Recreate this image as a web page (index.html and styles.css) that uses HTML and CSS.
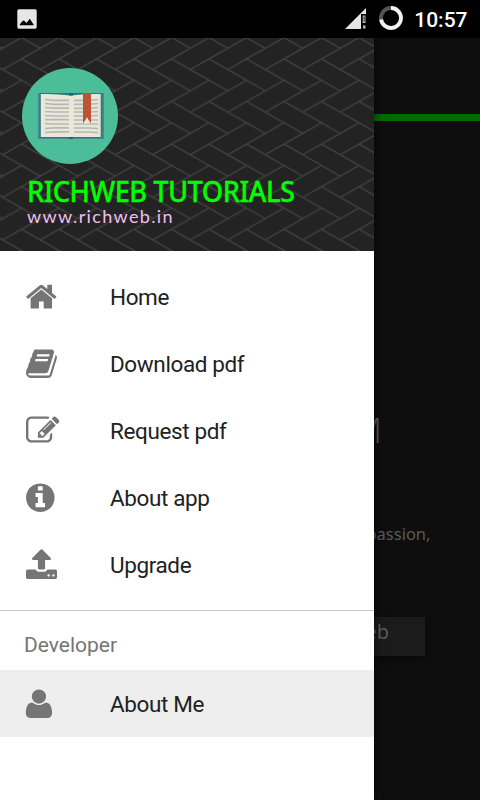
FILE: index.html
```html
<!DOCTYPE html>
<html lang="en">
<head>
<meta charset="utf-8">
<title>Richweb Tutorials</title>
<link rel="stylesheet" href="styles.css">
</head>
<body>
<div class="screen">
  <header class="status">
    <svg class="status-photo" viewBox="0 0 20 20"><rect x=".3" y=".3" width="19.400" height="19.400" rx="1.600" fill="#e6e6e6"/><path d="M2.500 16.300C4 13.500 6 11.500 7 11.500L9.500 14l3.300-4.300 4.200 6.600z" fill="#000"/></svg>
    <div class="status-right">
      <svg class="status-signal" viewBox="0 0 21 21"><path d="M0 21L21 0v6H16v15z" fill="#e6e6e6"/><path d="M17.700 7.500h2.800v7.500h-2.800zM18 17.500h2.500v3H18z" fill="#bbb"/><path d="M18.700 8.500h.9v5h-.9z" fill="#111"/></svg>
      <svg class="status-ring" viewBox="0 0 24 24"><circle cx="12" cy="12" r="10" fill="none" stroke="#555" stroke-width="3.800"/><path d="M12 2a10 10 0 1 1-9.900 11.400" fill="none" stroke="#f2f2f2" stroke-width="3.800"/></svg>
      <span class="clock">10:57</span>
    </div>
  </header>
  <div class="body">
    <main class="page">
      <div class="toolbar"></div>
      <div class="heading">M</div>
      <p class="tagline">passion,</p>
      <div class="button">Web</div>
    </main>
    <nav class="drawer">
      <div class="drawer-head">
        <svg class="pattern" width="374" height="213">
          <defs>
            <pattern id="weave" x="21.500" y="20.900" width="37.500" height="42.600" patternUnits="userSpaceOnUse">
              <g fill="none" stroke="#424242" stroke-width="1.400">
                <path d="M-18.750 10.650L37.500 -21.300M0 0L56.250 31.950"/>
                <path d="M18.750 10.650L75 -21.300M-37.500 0L18.750 31.950"/>
                <path d="M-18.750 53.250L37.500 21.300M18.750 53.250L75 21.300M-56.250 53.250L0 21.300"/>
              </g>
            </pattern>
          </defs>
          <rect width="374" height="213" fill="#232323"/>
          <rect width="374" height="213" fill="url(#weave)"/>
        </svg>
        <svg class="avatar" viewBox="0 0 96 96">
          <circle cx="48" cy="48" r="48" fill="#4bbd98"/>
          <rect x="16" y="25" width="66" height="46" fill="#448c90"/>
          <rect x="17.500" y="25" width="63" height="45" fill="#347383"/>
          <path d="M18.800 26Q34 25.500 48 27.500Q64 25.500 78.700 26V69H18.800z" fill="#e7e8d7"/>
          <path d="M78 27v42" stroke="#d5d0b5"/>
          <path d="M47 25h4v2.500h-4zM47 69h4v2h-4z" fill="#285f70"/>
          <path d="M23 31.500l9 .9h15M23 35.500l9 .9h15M23 39.500l9 .7h15M23 43.500l9 .5h15M23 47.500l9 .5h15M23 51.700h24M23 55.700l9 .3h15M23 60.500l9-.7h15M23 64.500l9-.7h15M52 32.400h15l9-.9M52 36.400h15l9-.9M52 40.300h15l9-.8M52 44h15l9-.5M52 48h15l9-.5M52 52h24M52 56h24M52 60h15l9 .6M52 64h15l9 .6" fill="none" stroke="#b7b8b5" stroke-width="1.700"/>
          <path d="M61 25h8v30.500l-4-6-4 6z" fill="#bd5335"/>
          <path d="M61.800 55.500l3.200-6 3.200 6z" fill="#e7e8d7"/>
        </svg>
        <div class="brand">RICHWEB TUTORIALS</div>
        <div class="site">www.richweb.in</div>
      </div>
      <ul class="menu">
        <li class="item"><svg class="icon" viewBox="74 0 1792 1792"><path d="M1472 992v480q0 26-19 45t-45 19h-384v-384h-256v384h-384q-26 0-45-19t-19-45v-480q0-1 .5-3t.5-3l575-474 575 474q1 2 1 6zm223-69l-62 74q-8 9-21 11h-3q-13 0-21-7l-692-577-692 577q-12 8-24 7-13-2-21-11l-62-74q-8-10-7-23.500t11-21.500l719-599q32-26 76-26t76 26l244 204v-195q0-14 9-23t23-9h192q14 0 23 9t9 23v408l219 182q10 8 11 21.500t-7 23.500z"/></svg><span class="label">Home</span></li>
        <li class="item"><svg class="icon" viewBox="64 0 1792 1792"><path d="M1703 478q40 57 18 129l-275 906q-19 64-76.500 107.500t-122.500 43.500h-923q-77 0-148.500-53.500t-99.500-131.500q-24-67-2-127 0-4 3-27t4-37q1-8-3-21.500t-3-19.500q2-11 8-21t16.500-23.500 16.500-23.500q23-38 45-91.500t30-91.500q3-10 .5-30t-.5-28q3-11 17-28t17-23q21-36 42-92t25-90q1-9-2.500-32t.5-28q4-13 22-30.500t22-22.500q19-26 42.500-84.500t27.500-96.500q1-8-3-25.500t-2-26.500q2-8 9-18t18-23 17-21q8-12 16.500-30.500t15-35 16-36 19.500-32 26.500-23.500 36-11.500 47.500 5.500l-1 3q38-9 51-9h761q74 0 114 56t18 130l-274 906q-36 119-71.500 153.500t-128.500 34.500h-869q-27 0-38 15-11 16-1 43 24 70 144 70h923q29 0 56-15.500t35-41.500l300-987q7-22 5-57 38 15 59 43zm-1064 2q-4 13 2 22.500t20 9.500h608q13 0 25.500-9.500t16.500-22.500l21-64q4-13-2-22.500t-20-9.500h-608q-13 0-25.500 9.500t-16.500 22.500zm-83 256q-4 13 2 22.500t20 9.500h608q13 0 25.500-9.500t16.500-22.500l21-64q4-13-2-22.500t-20-9.500h-608q-13 0-25.500 9.500t-16.500 22.500z"/></svg><span class="label">Download pdf</span></li>
        <li class="item"><svg class="icon" viewBox="0 0 1792 1792"><path d="M888 1184l116-116-152-152-116 116v56h96v96h56zm440-720q-16-16-33 1l-350 350q-17 17-1 33t33-1l350-350q17-17 1-33zm80 594v190q0 119-84.500 203.500t-203.500 84.500h-832q-119 0-203.500-84.500t-84.500-203.500v-832q0-119 84.500-203.500t203.500-84.500h832q63 0 117 25 15 7 18 23 3 17-9 29l-49 49q-14 14-32 8-23-6-45-6h-832q-66 0-113 47t-47 113v832q0 66 47 113t113 47h832q66 0 113-47t47-113v-126q0-13 9-22l64-64q15-15 35-7t20 29zm-96-738l288 288-672 672h-288v-288zm444 132l-92 92-288-288 92-92q28-28 68-28t68 28l152 152q28 28 28 68t-28 68z"/></svg><span class="label">Request pdf</span></li>
        <li class="item"><svg class="icon" viewBox="128 0 1792 1792"><path d="M1152 1376v-160q0-14-9-23t-23-9h-96v-512q0-14-9-23t-23-9h-320q-14 0-23 9t-9 23v160q0 14 9 23t23 9h96v320h-96q-14 0-23 9t-9 23v160q0 14 9 23t23 9h448q14 0 23-9t9-23zm-128-896v-160q0-14-9-23t-23-9h-192q-14 0-23 9t-9 23v160q0 14 9 23t23 9h192q14 0 23-9t9-23zm640 416q0 209-103 385.500t-279.500 279.500-385.500 103-385.500-103-279.500-279.500-103-385.500 103-385.500 279.500-279.500 385.500-103 385.500 103 279.500 279.500 103 385.500z"/></svg><span class="label">About app</span></li>
        <li class="item"><svg class="icon" viewBox="64 0 1792 1792"><path d="M1344 1472q0-26-19-45t-45-19-45 19-19 45 19 45 45 19 45-19 19-45zm256 0q0-26-19-45t-45-19-45 19-19 45 19 45 45 19 45-19 19-45zm128-224v320q0 40-28 68t-68 28h-1472q-40 0-68-28t-28-68v-320q0-40 28-68t68-28h427q21 56 70.500 92t110.500 36h256q61 0 110.500-36t70.500-92h427q40 0 68 28t28 68zm-325-648q-17 40-59 40h-256v448q0 26-19 45t-45 19h-256q-26 0-45-19t-19-45v-448h-256q-42 0-59-40-17-39 14-69l448-448q18-19 45-19t45 19l448 448q31 30 14 69z"/></svg><span class="label">Upgrade</span></li>
      </ul>
      <h2 class="group">Developer</h2>
      <ul class="menu-group">
        <li class="item item-selected"><svg class="icon" viewBox="202 0 1792 1792"><path d="M1600 1405q0 120-73 189.500t-194 69.500h-874q-121 0-194-69.500t-73-189.500q0-53 3.500-103.500t14-109 26.500-108.500 43-97.500 62-81 85.500-53.500 111.500-20q9 0 42 21.500t74.500 48 108 48 133.500 21.500 133.500-21.500 108-48 74.500-48 42-21.500q61 0 111.500 20t85.500 53.500 62 81 43 97.500 26.500 108.500 14 109 3.500 103.500zm-320-893q0 159-112.500 271.500t-271.500 112.500-271.500-112.500-112.500-271.500 112.500-271.500 271.500-112.500 271.500 112.500 112.500 271.500z"/></svg><span class="label">About Me</span></li>
      </ul>
    </nav>
  </div>
</div>
</body>
</html>
```
FILE: styles.css
```css
* { box-sizing: border-box; }
body { margin: 0; background: #0e0e0e; font-family: Roboto, sans-serif; }
ul { list-style: none; margin: 0; padding: 0; }
svg { display: block; }

.screen { width: 480px; height: 800px; overflow: hidden; display: flex; flex-direction: column; }

.status { height: 38px; flex: none; background: #000; display: flex; justify-content: space-between; align-items: flex-start; padding: 0 12.500px 0 17px; }
.status-photo { width: 20px; height: 20px; margin-top: 9px; }
.status-right { display: flex; align-items: flex-start; }
.status-signal { width: 21px; height: 21px; margin: 8px 13px 0 0; }
.status-ring { width: 24px; height: 24px; margin: 6px 11.500px 0 0; }
.clock { color: #fff; font-size: 21px; font-weight: 500; line-height: 38px; height: 38px; margin-top: 1px; }

.body { position: relative; flex: 1; }

.page { height: 762px; background: #0e0e0e; color: #5a5a5a; display: flex; flex-direction: column; align-items: flex-end; font-family: "Noto Sans", sans-serif; }
.toolbar { width: 480px; height: 83px; border-bottom: 7px solid #006b00; }
.heading { margin: 284px 98px 0 0; height: 50px; font: 300 35px/50px "Open Sans", sans-serif; }
.tagline { margin: 67px 49.500px 0 0; height: 24px; font-size: 16.500px; line-height: 24px; }
.button { width: 170px; height: 39px; margin: 71px 55px 0 0; padding-right: 36px; background: #1b1b1b; box-shadow: 0 2px 5px #080808; font-size: 20px; line-height: 30px; text-align: right; }

.drawer { position: absolute; left: 0; top: 0; width: 374px; height: 762px; background: #fff; box-shadow: 0 0 10px rgba(0, 0, 0, .6); }
.drawer-head { position: relative; height: 213px; padding: 30px 22px 0; }
.pattern { position: absolute; left: 0; top: 0; }
.avatar { position: relative; width: 96px; height: 96px; }
.brand { position: relative; margin: 12px 0 0 4.500px; height: 30px; font: 500 28.500px/30px "Noto Sans", sans-serif; color: #0f0; letter-spacing: -.600px; -webkit-text-stroke: .3px #0f0; white-space: nowrap; transform: scaleX(.96); transform-origin: 0 0; }
.site { position: relative; margin: 0 0 0 5px; height: 20px; font: 400 18px/20px Lato, sans-serif; color: #efbff0; letter-spacing: 1.350px; white-space: nowrap; }

.menu { padding: 12px 0; border-bottom: 1px solid #c8c8c8; }
.item { display: flex; align-items: center; height: 67px; padding-left: 26px; }
.item-selected { background: #eee; }
.icon { width: 33.400px; height: 33.400px; margin-right: 50.600px; fill: #757575; overflow: visible; }
.label { font-size: 22.500px; line-height: 26px; color: #212121; letter-spacing: -.380px; padding-top: 1px; }
.group { margin: 0; padding: 9px 24px 0; height: 59px; font-size: 21px; font-weight: 400; line-height: 50px; color: #757575; }
```
